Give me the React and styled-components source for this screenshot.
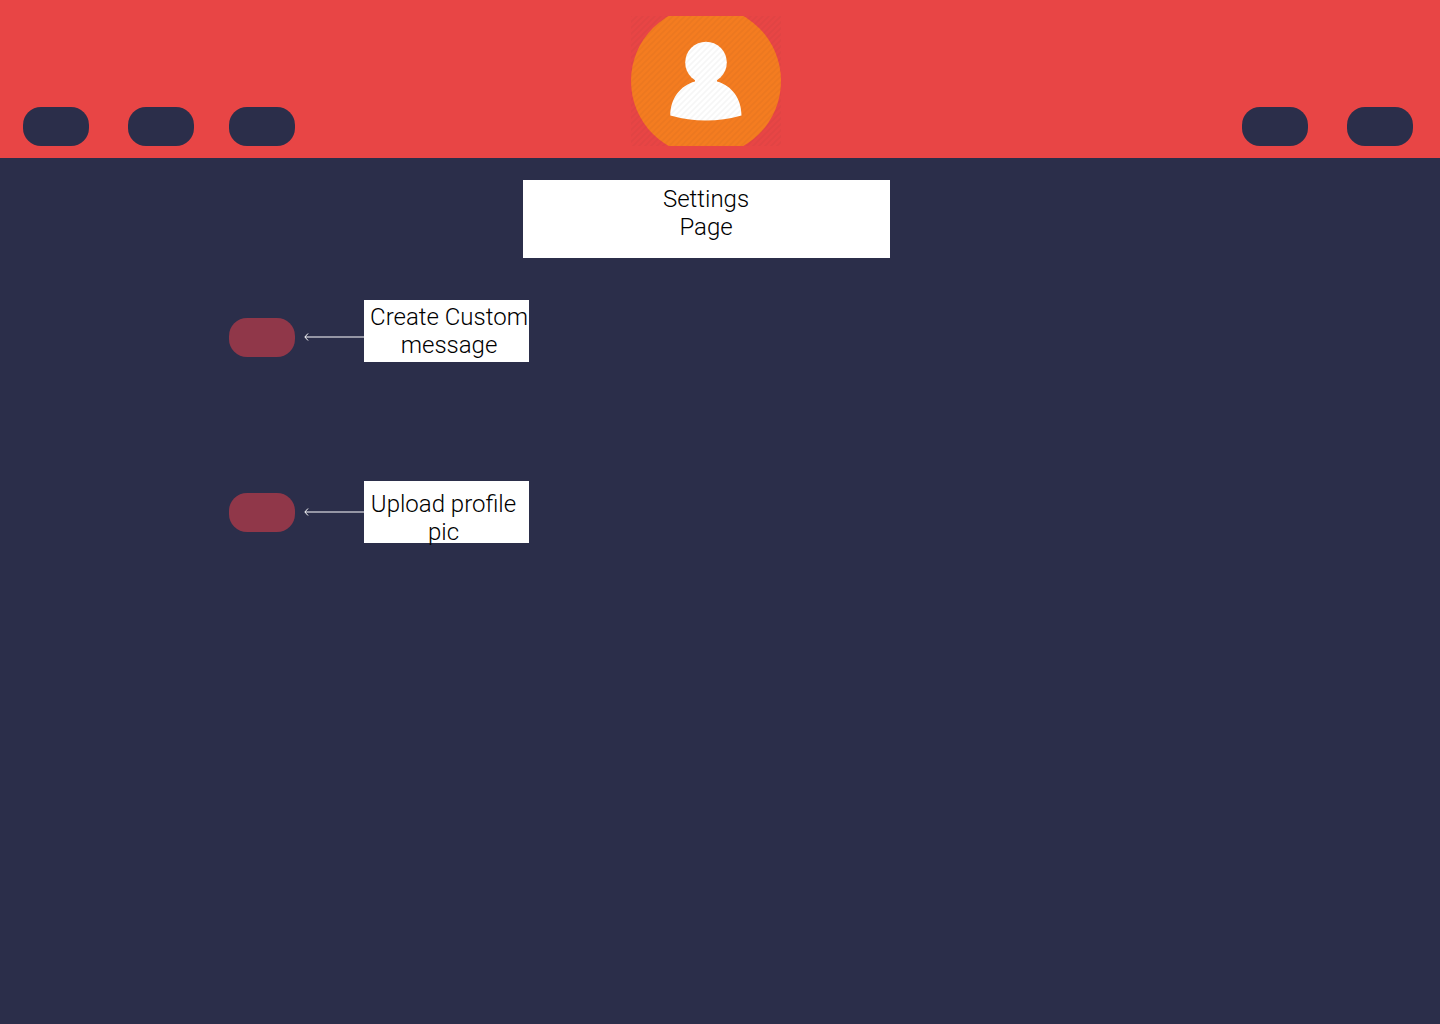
import React from "react";
import styled, { createGlobalStyle } from "styled-components";

const navy = "#2b2e4a";
const red = "#e84545";
const maroon = "#903749";

const GlobalStyle = createGlobalStyle`
  *, *::before, *::after { box-sizing: border-box; }
  body {
    margin: 0;
    background: ${navy};
    color: #000;
    font-family: Roboto, "Liberation Sans", sans-serif;
    font-weight: 300;
    font-size: 24px;
    line-height: 28px;
  }
`;

const Header = styled.header`
  display: grid;
  grid-template-columns: 1fr auto 1fr;
  align-items: end;
  padding: 16px 27px 12px 0;
  background: ${red};
`;

const Nav = styled.nav`
  display: flex;
  justify-content: ${(p) => p.$align || "flex-start"};
  gap: 35px;
  padding-left: 23px;
`;

const NavGroup = styled.div`
  display: flex;
  gap: 39px;
`;

const Pill = styled.button`
  flex: none;
  width: 66px;
  height: 39px;
  padding: 0;
  border: 0;
  border-radius: 18px;
  background: ${(p) => (p.$muted ? maroon : navy)};
  cursor: pointer;
`;

const AvatarArt = styled.svg`
  display: block;
  width: 151px;
  height: 130px;
`;

const Main = styled.main`
  padding: 22px 27px 48px 0;
`;

const Title = styled.h1`
  width: 367px;
  margin: 0 auto 42px;
  padding: 5px 131px 17px 130px;
  background: #fff;
  font: inherit;
  text-align: center;
`;

const Settings = styled.div`
  display: flex;
  flex-direction: column;
  gap: 119px;
  padding-left: 229px;
`;

const Setting = styled.div`
  display: flex;
  align-items: flex-start;
`;

const Control = styled.div`
  display: flex;
  align-items: center;
  gap: 9px;
  padding-top: ${(p) => p.$top}px;
`;

const ArrowArt = styled.svg`
  display: block;
  width: 60px;
  height: 9px;
`;

const Label = styled.label`
  width: 165px;
  height: 62px;
  padding: ${(p) => p.$padding};
  background: #fff;
  text-align: center;
`;

function Avatar() {
  return (
    <AvatarArt viewBox="0 0 151 130" role="img" aria-label="Profile picture">
      <defs>
        <pattern id="stripes" width="6" height="6" patternUnits="userSpaceOnUse">
          <path d="M-1 1L1 -1M-1 7L7 -1M5 7L7 5" stroke="#202020" strokeWidth="1.6" />
        </pattern>
      </defs>
      <svg width="150" height="130">
        <circle cx="75" cy="65" r="75" fill="#f47c20" />
        <circle cx="75" cy="46.5" r="20.8" fill="#fff" />
        <path
          d="M64 62V65.5C49 69.5 39.300 83 39.300 99.5Q57 104.500 75 104.500T110.500 99.500C110.500 83 101 69.500 86 65.500V62Z"
          fill="#fff"
        />
        <rect width="150" height="130" fill="url(#stripes)" opacity="0.04" />
      </svg>
    </AvatarArt>
  );
}

function Arrow() {
  return (
    <ArrowArt viewBox="0 0 60 9" aria-hidden="true">
      <path d="M1 4H60" stroke="#9596a5" strokeWidth="2" />
      <path d="M4 0.500L0.800 4L4 7.500" fill="none" stroke="#fff" strokeWidth="1" />
    </ArrowArt>
  );
}

export default function App() {
  return (
    <>
      <GlobalStyle />
      <Header>
        <Nav aria-label="Main">
          <NavGroup>
            <Pill type="button" aria-label="Home" />
            <Pill type="button" aria-label="Messages" />
          </NavGroup>
          <Pill type="button" aria-label="Contacts" />
        </Nav>
        <Avatar />
        <Nav $align="flex-end" aria-label="Account">
          <NavGroup>
            <Pill type="button" aria-label="Settings" />
            <Pill type="button" aria-label="Log out" />
          </NavGroup>
        </Nav>
      </Header>
      <Main>
        <Title>Settings Page</Title>
        <Settings>
          <Setting>
            <Control $top={18}>
              <Pill $muted type="button" id="custom-message" />
              <Arrow />
            </Control>
            <Label htmlFor="custom-message" $padding="3px 0 3px 5px">
              Create Custom message
            </Label>
          </Setting>
          <Setting>
            <Control $top={12}>
              <Pill $muted type="button" id="profile-pic" />
              <Arrow />
            </Control>
            <Label htmlFor="profile-pic" $padding="9px 6px 0 0">
              Upload profile pic
            </Label>
          </Setting>
        </Settings>
      </Main>
    </>
  );
}
